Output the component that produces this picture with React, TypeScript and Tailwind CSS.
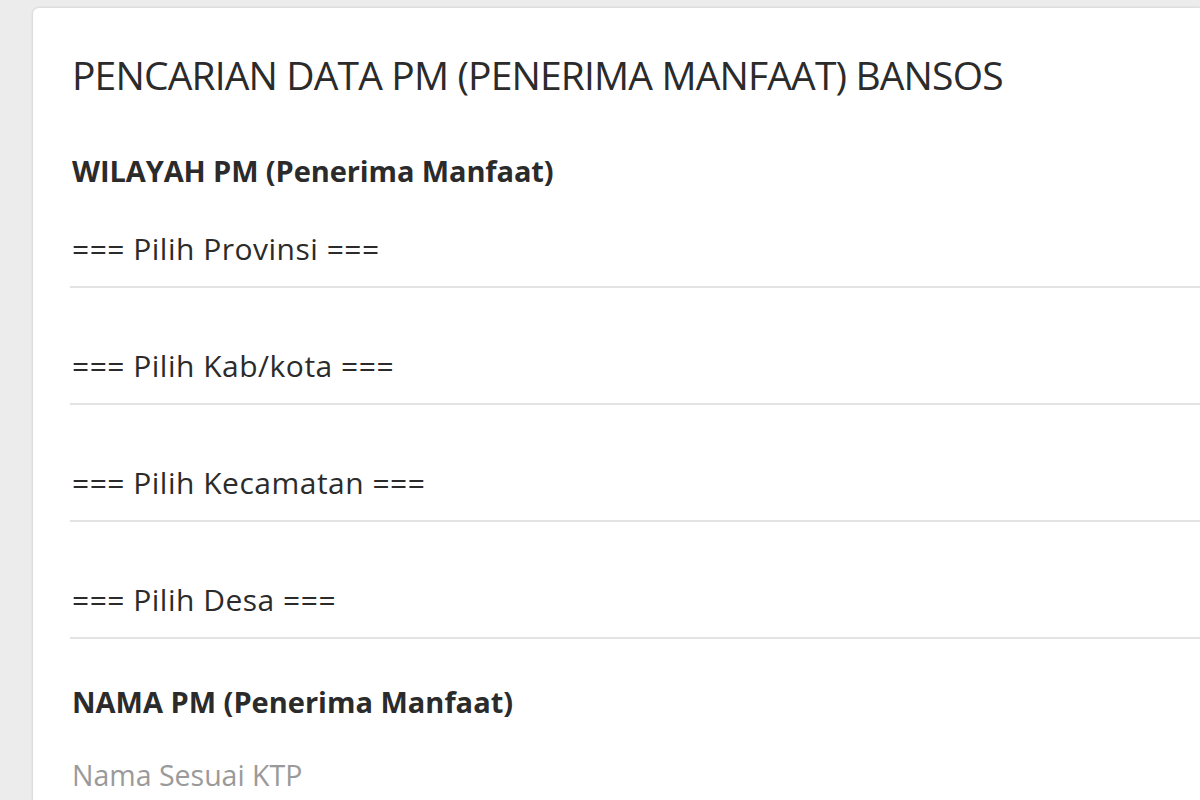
const selects = ["=== Pilih Provinsi ===", "=== Pilih Kab/kota ===", "=== Pilih Kecamatan ===", "=== Pilih Desa ==="];

export default function App() {
  return (
    <div className="h-[800px] overflow-hidden bg-[#ececec] pl-[33px] pt-[8px] font-['Open_Sans',sans-serif] text-[#2b2b2b]">
      <div className="h-[900px] rounded-tl-[6px] bg-white pl-[39px] shadow-[0_0_3px_rgba(0,0,0,0.18)]">
        <h1 className="pt-[40px] text-[39px] leading-[54px] font-normal tracking-[-0.85px]">PENCARIAN DATA PM (PENERIMA MANFAAT) BANSOS</h1>
        <h2 className="mt-[47px] text-[29px] leading-[44px] font-bold tracking-[-0.1px]">WILAYAH PM (Penerima Manfaat)</h2>
        <div className="mt-[17px] flex flex-col gap-[39px]">
          {selects.map((s) => (
            <div key={s} className="-ml-[2px] flex h-[78px] items-center border-b-2 border-[#e3e3e3] pl-[2px] text-[30px] tracking-[0.5px]">
              {s}
            </div>
          ))}
        </div>
        <h2 className="mt-[41px] text-[29px] leading-[44px] font-bold">NAMA PM (Penerima Manfaat)</h2>
        <div className="mt-[29px] text-[28.5px] leading-[44px] text-[#9a9a9a]">Nama Sesuai KTP</div>
      </div>
    </div>
  );
}
